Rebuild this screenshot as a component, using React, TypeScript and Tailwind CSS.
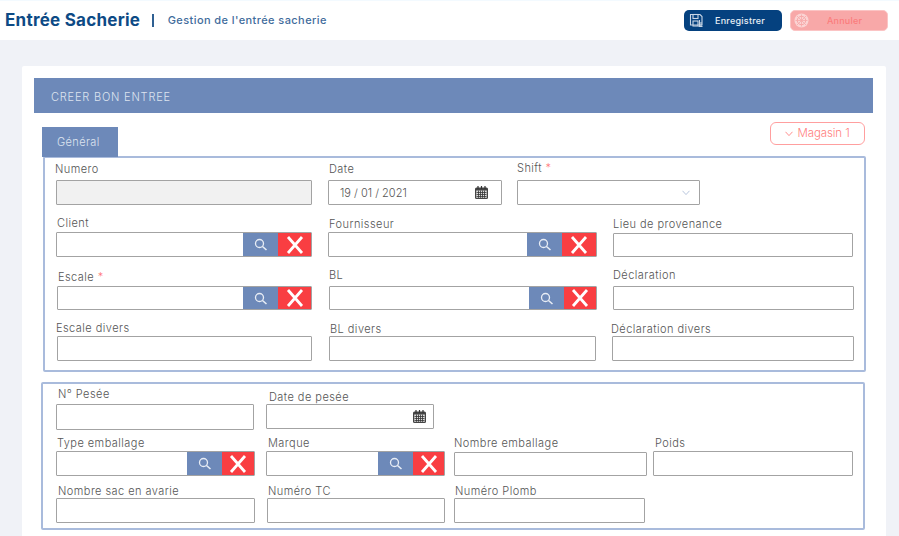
import React from "react";

const Floppy = () => (
  <svg width="15" height="15" viewBox="0 0 15 15" fill="none" stroke="#c9d6e6" strokeWidth="1.1" className="shrink-0">
    <path d="M1.5 1.5h9.5l2 2v8.5h-11.500z" />
    <rect x="4" y="1.500" width="5" height="4" />
    <rect x="4" y="8" width="5" height="5" />
    <path d="M10.500 7v6M12 9v4.500M9.500 13.500h4" />
  </svg>
);

const Wheel = () => (
  <svg width="15" height="15" viewBox="0 0 15 15" className="shrink-0">
    <circle cx="7.500" cy="7.500" r="7" fill="#fbd3d3" />
    <circle cx="7.500" cy="7.500" r="4.200" fill="none" stroke="#f8a8a8" strokeWidth="1" />
    <path d="M3 3l9 9M12 3l-9 9M7.500 1.500v12M1.500 7.500h12" stroke="#f8a8a8" strokeWidth="0.800" />
  </svg>
);

const Calendar = () => (
  <svg width="15" height="15" viewBox="0 0 15 15" fill="none" className="shrink-0">
    <rect x="1" y="2.500" width="13" height="11.500" rx="1.500" fill="#444" />
    <rect x="2.200" y="5.500" width="10.600" height="7.300" fill="#ddd" />
    <path d="M2.500 7.500h10M2.500 9.500h10M2.500 11.500h10M4.500 5.500v7.300M6.500 5.500v7.300M8.500 5.500v7.300M10.500 5.500v7.300" stroke="#333" strokeWidth="0.800" />
    <path d="M4 1v3M7.500 1v3M11 1v3" stroke="#333" strokeWidth="1.200" />
  </svg>
);

const Search = () => (
  <svg width="15" height="15" viewBox="0 0 15 15" fill="none" stroke="#e8edf5" strokeWidth="1.300">
    <circle cx="6.500" cy="6.500" r="4" />
    <path d="M9.500 9.500l4 3.500" strokeWidth="1.600" />
  </svg>
);

const Cross = () => (
  <svg width="18" height="18" viewBox="0 0 18 18" fill="none" stroke="#fff" strokeWidth="2.800">
    <path d="M2 1l14 16M16 1L2 17" />
  </svg>
);

const Chevron = ({ color = "#ff8f8f", size = 8 }: { color?: string; size?: number }) => (
  <svg width={size} height={size * 0.7} viewBox="0 0 8 5.600" fill="none" stroke={color} strokeWidth="1">
    <path d="M0.500 0.800L4 4.600L7.500 0.800" />
  </svg>
);

type FieldProps = {
  label: string;
  required?: boolean;
  box: string;
  labelCls?: string;
  lookup?: string;
  cross?: string;
  children?: React.ReactNode;
};

const Field = ({ label, required, box, labelCls = "", lookup, cross = "w-[33px]", children }: FieldProps) => (
  <div className="flex flex-col shrink-0">
    <div className={`text-[11px] font-light leading-[13px] tracking-[0.45px] text-[#555] whitespace-nowrap ${labelCls}`}>
      {label}
      {required && <span className="text-[#f77]"> *</span>}
    </div>
    <div className={`flex items-stretch border border-[#a3a3a3] rounded-[1px] bg-white overflow-hidden ${box}`}>
      <div className="flex-1 flex items-center min-w-0">{children}</div>
      {lookup && (
        <>
          <div className={`bg-[#6d89b9] flex items-center justify-center ${lookup}`}>
            <Search />
          </div>
          <div className={`bg-[#f93e42] flex items-center justify-center ${cross}`}>
            <Cross />
          </div>
        </>
      )}
    </div>
  </div>
);

export default function App() {
  return (
    <div className="w-[899px] h-[536px] overflow-hidden bg-[#f0f2f7] font-['Inter','Liberation_Sans',sans-serif]">
      <header className="h-10 bg-white border-t border-[#f3faff] flex items-center pl-[5px] pr-[11px]">
        <h1 className="text-[17px] font-bold text-[#0d4a85] tracking-[0.25px] leading-none">Entrée Sacherie</h1>
        <span className="w-[1.500px] h-[13px] bg-[#2f6092] ml-[12px]" />
        <span className="ml-[14px] text-[11px] font-medium text-[#3f6c9c] tracking-[0.42px]">Gestion de l'entrée sacherie</span>
        <div className="ml-auto flex gap-2">
          <button className="w-[98px] h-[21px] rounded-[5px] bg-[#05417f] flex items-center pl-[5px] text-[9px] font-medium text-[#e6edf5] tracking-[0.25px]">
            <Floppy />
            <span className="ml-[11px]">Enregistrer</span>
          </button>
          <button className="w-[98px] h-[21px] rounded-[5px] bg-[#f8a8a8] border border-[#fbc4c4] flex items-center pl-[3px] text-[9px] font-medium text-[#fb7c7c] tracking-[0.2px]">
            <Wheel />
            <span className="ml-[18px]">Annuler</span>
          </button>
        </div>
      </header>

      <main className="mt-[26px] ml-[22px] w-[864px] bg-white rounded-[2px] pt-3 h-[480px]">
        <div className="ml-3 w-[839px] h-[35px] bg-[#6d89b9] flex items-center pl-[17px] pt-[3px] text-[11px] font-light text-[#dde4ef] tracking-[0.8px]">
          CREER BON ENTREE
        </div>

        <div className="relative ml-5 mt-[14px] h-[30px] flex items-start">
          <div className="w-[76px] h-[30px] bg-[#6d89b9] flex items-center pl-[15px] text-[11px] font-light text-[#dde4ef] tracking-[0.4px]">
            Général
          </div>
          <button className="absolute left-[728px] top-[-5px] w-[95px] h-[23px] border border-[#ff9f9f] rounded-[6px] bg-white flex items-center justify-center gap-[4px] text-[11.500px] font-light text-[#ff7f7f] tracking-[-0.1px]">
            <Chevron />
            Magasin 1
          </button>
        </div>

        <section className="ml-[21px] w-[823px] h-[216px] border-2 border-[#a9bbdc] rounded-[2px] -mt-[1px]">
          <div className="flex items-end h-[47px]">
            <Field label="Numero" box="w-[256px] h-[25px] !bg-[#f1f1f1] ml-[11px]" labelCls="ml-[10px] mb-[4px]" />
            <Field label="Date" box="w-[174px] h-[25px] ml-[16px]" labelCls="ml-[17px] mb-[4px]">
              <div className="flex items-center justify-between w-full pl-[11px] pr-[12px] text-[11px] font-light text-[#555]">
                <span className="pt-[1px]">19 / 01 / 2021</span>
                <Calendar />
              </div>
            </Field>
            <Field label="Shift" required box="w-[183px] h-[25px] ml-[15px]" labelCls="ml-[15px] mb-[5px]">
              <div className="flex justify-end w-full pr-[9px]">
                <Chevron color="#b8c6dd" />
              </div>
            </Field>
          </div>
          <div className="flex items-end h-[52px]">
            <Field label="Client" box="w-[256px] h-[25px] ml-[11px]" lookup="w-[35px]" labelCls="ml-[12px] mb-[2px]" />
            <Field label="Fournisseur" box="w-[269px] h-[25px] ml-[16px]" lookup="w-[35px]" cross="w-[34px]" labelCls="ml-[17px] mb-[1px]" />
            <Field label="Lieu de provenance" box="w-[240px] h-[24px] ml-[16px]" labelCls="ml-[16px] mb-[2px]" />
          </div>
          <div className="flex items-end h-[53px]">
            <Field label="Escale" required box="w-[255px] h-[24px] ml-[12px]" lookup="w-[35px]" labelCls="ml-[13px] mb-[2px]" />
            <Field label="BL" box="w-[268px] h-[24px] ml-[17px]" lookup="w-[35px]" cross="w-[32px]" labelCls="ml-[17px] mb-[4px]" />
            <Field label="Déclaration" box="w-[241px] h-[24px] ml-[16px]" labelCls="ml-[16px] mb-[4px]" />
          </div>
          <div className="flex items-end h-[51px]">
            <Field label="Escale divers" box="w-[255px] h-[25px] ml-[12px]" labelCls="ml-[11px] mb-[1px]" />
            <Field label="BL divers" box="w-[267px] h-[25px] ml-[17px]" labelCls="ml-[18px]" />
            <Field label="Déclaration divers" box="w-[242px] h-[25px] ml-[16px]" labelCls="ml-[15px]" />
          </div>
        </section>

        <section className="ml-[19px] mt-[10px] w-[824px] h-[148px] border-2 border-[#a9bbdc] rounded-[2px]">
          <div className="flex items-start h-[46px]">
            <Field label="N° Pesée" box="w-[198px] h-[26px] ml-[13px] mt-[3px]" labelCls="ml-[15px] mt-[4px]" />
            <Field label="Date de pesée" box="w-[168px] h-[25px] ml-[12px]" labelCls="ml-[15px] mt-[7px]">
              <div className="flex justify-end w-full pr-[6px]">
                <Calendar />
              </div>
            </Field>
          </div>
          <div className="flex items-end h-[46px]">
            <Field label="Type emballage" box="w-[199px] h-[25px] ml-[13px]" lookup="w-[35px]" cross="w-[32px]" labelCls="ml-[14px] mb-[1px]" />
            <Field label="Marque" box="w-[179px] h-[25px] ml-[11px]" lookup="w-[35px]" cross="w-[31px]" labelCls="ml-[13px] mb-[1px]" />
            <Field label="Nombre emballage" box="w-[193px] h-[24px] ml-[9px]" labelCls="ml-[9px] mb-[2px]" />
            <Field label="Poids" box="w-[200px] h-[25px] ml-[6px]" labelCls="ml-[8px] mb-[1px]" />
          </div>
          <div className="flex items-end h-[47px]">
            <Field label="Nombre sac en avarie" box="w-[199px] h-[25px] ml-[13px]" labelCls="ml-[15px]" />
            <Field label="Numéro TC" box="w-[178px] h-[25px] ml-[12px]" labelCls="ml-[13px]" />
            <Field label="Numéro Plomb" box="w-[191px] h-[25px] ml-[9px]" labelCls="ml-[10px]" />
          </div>
        </section>
        <div className="ml-5 mt-[6px] w-[76px] h-[2px] bg-[#e8ecf3]" />
      </main>
    </div>
  );
}
